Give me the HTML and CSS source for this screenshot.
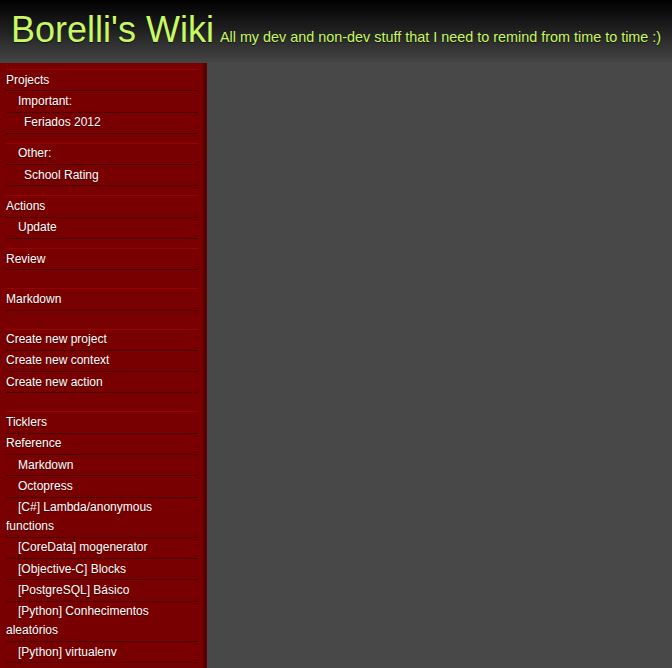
FILE: index.html
```html
<!DOCTYPE html>
<html lang="en">
<head>
<meta charset="utf-8">
<title>Borelli's Wiki</title>
<link rel="stylesheet" href="styles.css">
</head>
<body>
<header class="masthead">
  <h1 class="title">Borelli's Wiki</h1>
  <span class="tagline">All my dev and non-dev stuff that I need to remind from time to time :)</span>
</header>
<div class="layout">
  <nav class="sidebar">
    <ul class="group">
      <li class="item">Projects</li>
      <li class="item lvl1">Important:</li>
      <li class="item lvl2">Feriados 2012</li>
    </ul>
    <ul class="group">
      <li class="item lvl1">Other:</li>
      <li class="item lvl2">School Rating</li>
    </ul>
    <ul class="group">
      <li class="item">Actions</li>
      <li class="item lvl1">Update</li>
    </ul>
    <ul class="group wide">
      <li class="item">Review</li>
    </ul>
    <ul class="group wide">
      <li class="item">Markdown</li>
    </ul>
    <ul class="group wide">
      <li class="item">Create new project</li>
      <li class="item">Create new context</li>
      <li class="item">Create new action</li>
    </ul>
    <ul class="group">
      <li class="item">Ticklers</li>
      <li class="item">Reference</li>
      <li class="item lvl1">Markdown</li>
      <li class="item lvl1">Octopress</li>
      <li class="item lvl1">[C#] Lambda/anonymous functions</li>
      <li class="item lvl1">[CoreData] mogenerator</li>
      <li class="item lvl1">[Objective-C] Blocks</li>
      <li class="item lvl1">[PostgreSQL] Básico</li>
      <li class="item lvl1">[Python] Conhecimentos aleatórios</li>
      <li class="item lvl1">[Python] virtualenv</li>
    </ul>
  </nav>
  <main class="content"></main>
</div>
</body>
</html>
```
FILE: styles.css
```css
html, body {
  margin: 0;
  padding: 0;
  height: 100%;
}

body {
  background: #484848;
  font-family: "Liberation Sans", Arial, sans-serif;
  display: flex;
  flex-direction: column;
  overflow: hidden;
}

.masthead {
  height: 63px;
  box-sizing: border-box;
  padding: 12px 0 0 11px;
  background: linear-gradient(#000 0%, #1e1e1e 45%, #464646 100%);
  display: flex;
  align-items: baseline;
  flex-shrink: 0;
}

.title {
  margin: 0;
  font-size: 36px;
  line-height: 36px;
  font-weight: normal;
  color: #c8f864;
  text-shadow: 0 1px 1px rgba(0, 0, 0, 0.6);
}

.tagline {
  margin-left: 6px;
  font-size: 14.4px;
  color: #c8f864;
  text-shadow: 0 1px 1px rgba(0, 0, 0, 0.6);
  white-space: nowrap;
}

.layout {
  flex: 1;
  display: flex;
  min-height: 0;
}

.sidebar {
  width: 207px;
  box-sizing: border-box;
  flex-shrink: 0;
  background: #780000;
  border-right: 4px solid #5a0000;
  padding: 6px 5px 0 6px;
}

.content {
  flex: 1;
}

.group {
  list-style: none;
  margin: 0 0 9px 0;
  padding: 0;
  border-top: 1px solid #9c0000;
}

.group.wide {
  margin-bottom: 18px;
}

.item {
  font-size: 12px;
  line-height: 19px;
  padding: 0.65px 0;
  color: #fff;
  text-shadow: 0 1px 1px rgba(0, 0, 0, 0.45);
  border-bottom: 1px solid #4a0000;
}

.item.lvl1 {
  text-indent: 12px;
}

.item.lvl2 {
  text-indent: 18px;
}
```
